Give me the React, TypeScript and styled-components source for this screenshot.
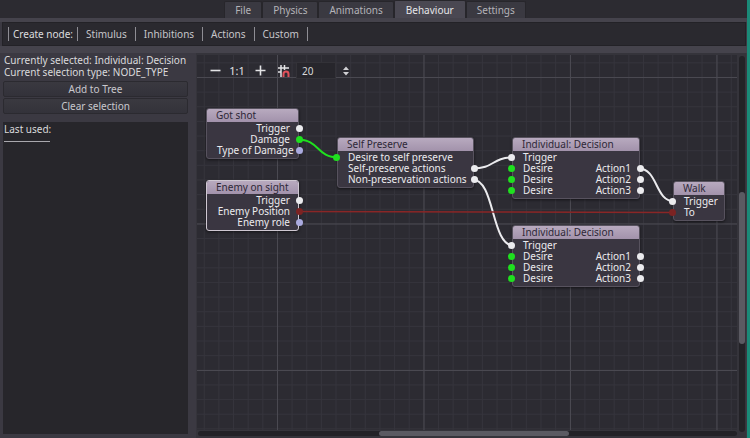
import React from 'react'
import styled, { createGlobalStyle } from 'styled-components'

const GlobalStyle = createGlobalStyle`
    html, body {
        margin: 0;
        padding: 0;
        background: #3b3942;
    }
    body {
        font-family: "Noto Sans", "DejaVu Sans", sans-serif;
        font-size: 10px;
        color: #d6d6d8;
    }
`

const Window = styled.div`
    position: relative;
    width: 747px;
    height: 438px;
    display: flex;
    flex-direction: column;
    background: #3b3942;
    border-right: 3px solid #1a8a78;
    overflow: hidden;
`

const TabBar = styled.div`
    height: 18px;
    display: flex;
    justify-content: center;
    align-items: flex-end;
    background: #2c2b31;
    padding-left: 3px;
`

const Tab = styled.div<{ $active?: boolean }>`
    height: ${p => (p.$active ? 18 : 17)}px;
    padding: 0 ${p => (p.$active ? 11 : 10)}px;
    box-sizing: border-box;
    display: flex;
    align-items: center;
    border: 1px solid #27262b;
    border-bottom: none;
    border-radius: 2px 2px 0 0;
    background: ${p => (p.$active ? '#4a4852' : '#3a3941')};
    color: ${p => (p.$active ? '#e6e6e8' : '#b4b3b8')};
`

const Strip = styled.div<{ $h: number }>`
    height: ${p => p.$h}px;
    background: #45434c;
`

const Toolbar = styled.div`
    height: 24px;
    margin: 0 1px 0 2px;
    box-sizing: border-box;
    display: flex;
    align-items: center;
    padding-left: 5px;
    background: #2a292f;
    border: 1px solid #232227;
`

const Sep = styled.span`
    width: 1px;
    height: 14px;
    background: #8e8d94;
`

const ToolLabel = styled.span`
    padding: 0 4px;
    color: #dcdcde;
`

const MenuButton = styled.span`
    padding: 0 8px;
    color: #c6c5ca;
`

const Content = styled.div`
    flex: 1;
    display: flex;
    min-height: 0;
`

const LeftPanel = styled.div`
    width: 185px;
    flex: none;
    padding: 1px 8px 4px 3px;
    display: flex;
    flex-direction: column;
`

const InfoLine = styled.div`
    height: 12px;
    line-height: 12px;
    padding-left: 1px;
    color: #dadadc;
    white-space: nowrap;
`

const Button = styled.div<{ $top: number }>`
    height: 16px;
    margin-top: ${p => p.$top}px;
    box-sizing: border-box;
    display: flex;
    align-items: center;
    justify-content: center;
    border: 1px solid #2b2a30;
    border-radius: 2px;
    background: linear-gradient(#3a3940, #33323a);
    color: #c9c8cd;
`

const ListBox = styled.div`
    flex: 1;
    margin-top: 8px;
    background: #27262b;
    padding: 0 1px;
`

const ListTitle = styled.div`
    display: inline-block;
    line-height: 12px;
    padding: 0 0 6px 0;
    width: 46px;
    white-space: nowrap;
    border-bottom: 1px solid #a9a8ae;
    color: #dadadc;
`

const GraphPanel = styled.div`
    flex: none;
    display: grid;
    grid-template-columns: 540px 9px;
    grid-template-rows: 375px 6px;
    padding: 2px 0 0 1px;
    background: #35343b;
`

const Canvas = styled.div`
    grid-column: 1;
    grid-row: 1;
    position: relative;
    overflow: hidden;
    background-color: #2c2b32;
    background-image:
        linear-gradient(to right, #4a4951 1px, transparent 1px),
        linear-gradient(to bottom, #4a4951 1px, transparent 1px),
        linear-gradient(to right, #35343c 1px, transparent 1px),
        linear-gradient(to bottom, #35343c 1px, transparent 1px);
    background-size: 146.5px 146.5px, 146.5px 146.5px, 14.65px 14.65px, 14.65px 14.65px;
    background-position: 80px 22px, 80px 22px, 6.75px 7.35px, 6.75px 7.35px;
`

const VTrack = styled.div`
    grid-column: 2;
    grid-row: 1 / 3;
    margin: 1px 1px 4px 2px;
    position: relative;
    background: #232227;
    border-radius: 3px;
`

const VThumb = styled.div`
    position: absolute;
    left: 0;
    right: 0;
    top: 136px;
    height: 152px;
    background: #5b5a62;
    border-radius: 3px;
`

const HTrack = styled.div`
    grid-column: 1;
    grid-row: 2;
    position: relative;
    margin: 1px 0 0 1px;
    background: #232227;
    border-radius: 3px;
`

const HThumb = styled.div`
    position: absolute;
    top: 0;
    bottom: 0;
    left: 181px;
    width: 190px;
    background: #5b5a62;
    border-radius: 3px;
`

const ZoomBar = styled.div`
    position: absolute;
    left: 11px;
    top: 7px;
    height: 17px;
    display: flex;
    align-items: center;
    color: #e2e2e4;
    z-index: 3;
`

const ZoomButton = styled.span<{ $w: number; $size?: number }>`
    width: ${p => p.$w}px;
    display: flex;
    justify-content: center;
    align-items: center;
    font-size: ${p => p.$size ?? 13}px;
`

const SnapButton = styled.span`
    display: flex;
    margin-left: 8px;
`

const SpinBox = styled.div`
    width: 40px;
    height: 17px;
    box-sizing: border-box;
    margin-left: 6px;
    padding-left: 5px;
    display: flex;
    align-items: center;
    background: #27262c;
    border: 1px solid #333238;
    color: #d8d8da;
`

const Wires = styled.svg`
    position: absolute;
    left: 0;
    top: 0;
    width: 540px;
    height: 375px;
    z-index: 1;
`

const NodeBox = styled.div<{ $selected?: boolean }>`
    position: absolute;
    z-index: 2;
    box-sizing: border-box;
    padding-bottom: 2px;
    background: #3a3641;
    border: 1px solid ${p => (p.$selected ? '#cfc8d2' : '#57525e')};
    border-radius: 3px;
    box-shadow: 0 1px 3px rgba(0, 0, 0, 0.55);
`

const NodeTitle = styled.div`
    height: 13px;
    line-height: 13px;
    padding-left: 9px;
    margin-bottom: 1px;
    background: linear-gradient(#b8aabf, #a292ab);
    border-radius: 2px 2px 0 0;
    color: #2e2837;
    white-space: nowrap;
`

const Row = styled.div`
    position: relative;
    height: 11px;
    line-height: 11px;
    display: flex;
    justify-content: space-between;
    padding: 0 8px 0 10px;
    color: #ecebee;
    white-space: nowrap;
`

const Port = styled.span<{ $side: 'left' | 'right'; $color: string }>`
    position: absolute;
    top: 2px;
    ${p => p.$side}: -5px;
    width: 7px;
    height: 7px;
    border-radius: 50%;
    background: ${p => p.$color};
`

const WHITE = '#ebebee'
const GREEN = '#1fe01f'
const LAVENDER = '#aaaadf'
const RED = '#7c2323'

type Slot = { left?: string; right?: string; inPort?: string; outPort?: string }
type NodeDef = { id: string; title: string; x: number; y: number; w: number; rows: Slot[]; selected?: boolean }

const decisionRows: Slot[] = [
    { left: 'Trigger', inPort: WHITE },
    { left: 'Desire', right: 'Action1', inPort: GREEN, outPort: WHITE },
    { left: 'Desire', right: 'Action2', inPort: GREEN, outPort: WHITE },
    { left: 'Desire', right: 'Action3', inPort: GREEN, outPort: WHITE },
]

const nodes: NodeDef[] = [
    {
        id: 'shot', title: 'Got shot', x: 9, y: 53, w: 93,
        rows: [
            { right: 'Trigger', outPort: WHITE },
            { right: 'Damage', outPort: GREEN },
            { right: 'Type of Damage', outPort: LAVENDER },
        ],
    },
    {
        id: 'sight', title: 'Enemy on sight', x: 9, y: 125, w: 93, selected: true,
        rows: [
            { right: 'Trigger', outPort: WHITE },
            { right: 'Enemy Position', outPort: RED },
            { right: 'Enemy role', outPort: LAVENDER },
        ],
    },
    {
        id: 'preserve', title: 'Self Preserve', x: 140, y: 82, w: 137,
        rows: [
            { left: 'Desire to self preserve', inPort: GREEN },
            { left: 'Self-preserve actions', outPort: WHITE },
            { left: 'Non-preservation actions', outPort: WHITE },
        ],
    },
    { id: 'dec1', title: 'Individual: Decision', x: 315, y: 82, w: 128, rows: decisionRows },
    { id: 'dec2', title: 'Individual: Decision', x: 315, y: 170, w: 128, rows: decisionRows },
    {
        id: 'walk', title: 'Walk', x: 476, y: 126, w: 52,
        rows: [
            { left: 'Trigger', inPort: WHITE },
            { left: 'To', inPort: RED },
        ],
    },
]

const byId = (id: string) => nodes.find(n => n.id === id)!
const portY = (n: NodeDef, row: number) => n.y + 15 + row * 11 + 5.5
const outPos = (id: string, row: number) => {
    const n = byId(id)
    return [n.x + n.w - 1.5, portY(n, row)]
}
const inPos = (id: string, row: number) => {
    const n = byId(id)
    return [n.x + 1.5, portY(n, row)]
}

const links = [
    { from: outPos('shot', 1), to: inPos('preserve', 0), color: GREEN, width: 2 },
    { from: outPos('preserve', 1), to: inPos('dec1', 0), color: WHITE, width: 2 },
    { from: outPos('preserve', 2), to: inPos('dec2', 0), color: WHITE, width: 2 },
    { from: outPos('dec1', 1), to: inPos('walk', 0), color: WHITE, width: 2 },
    { from: outPos('sight', 1), to: inPos('walk', 1), color: '#8a2626', width: 1.5 },
]

const curve = (a: number[], b: number[]) => {
    const dx = Math.max(Math.abs(b[0] - a[0]) * 0.55, 12)
    return `M${a[0]},${a[1]} C${a[0] + dx},${a[1]} ${b[0] - dx},${b[1]} ${b[0]},${b[1]}`
}

const Node = ({ node }: { node: NodeDef }) => (
    <NodeBox $selected={node.selected} style={{ left: node.x, top: node.y, width: node.w }}>
        <NodeTitle>{node.title}</NodeTitle>
        {node.rows.map((r, i) => (
            <Row key={i}>
                <span>{r.left ?? ''}</span>
                <span>{r.right ?? ''}</span>
                {r.inPort && <Port $side="left" $color={r.inPort} />}
                {r.outPort && <Port $side="right" $color={r.outPort} />}
            </Row>
        ))}
    </NodeBox>
)

const MinusIcon = () => (
    <svg width="11" height="11" viewBox="0 0 11 11">
        <path d="M0.5 5.5h10" stroke="#e4e4e6" strokeWidth="1.6" />
    </svg>
)

const PlusIcon = () => (
    <svg width="11" height="11" viewBox="0 0 11 11">
        <path d="M0.5 5.5h10M5.5 0.5v10" stroke="#e4e4e6" strokeWidth="1.6" />
    </svg>
)

const SnapIcon = () => (
    <svg width="13" height="14" viewBox="0 0 13 14">
        <path d="M4 1v12M7.5 1v5M1 4h11M1 8h3" stroke="#e4e4e6" strokeWidth="1.5" fill="none" />
        <path d="M6.5 13V10a2.5 2.5 0 0 1 5 0v3" stroke="#e0505a" strokeWidth="2" fill="none" />
    </svg>
)

const SpinArrows = () => (
    <svg width="8" height="12" viewBox="0 0 8 12" style={{ marginLeft: 6 }}>
        <path d="M1 5l3-3.5L7 5z M1 7l3 3.5L7 7z" fill="#d0d0d4" />
    </svg>
)

export default function App() {
    return (
        <>
            <GlobalStyle />
            <Window>
                <TabBar>
                    <Tab>File</Tab>
                    <Tab>Physics</Tab>
                    <Tab>Animations</Tab>
                    <Tab $active>Behaviour</Tab>
                    <Tab>Settings</Tab>
                </TabBar>
                <Strip $h={4} />
                <Toolbar>
                    <Sep />
                    <ToolLabel>Create node:</ToolLabel>
                    <Sep />
                    {['Stimulus', 'Inhibitions', 'Actions', 'Custom'].map(t => (
                        <React.Fragment key={t}>
                            <MenuButton>{t}</MenuButton>
                            <Sep />
                        </React.Fragment>
                    ))}
                </Toolbar>
                <Strip $h={7} />
                <Content>
                    <LeftPanel>
                        <InfoLine>Currently selected: Individual: Decision</InfoLine>
                        <InfoLine>Current selection type: NODE_TYPE</InfoLine>
                        <Button $top={3}>Add to Tree</Button>
                        <Button $top={1}>Clear selection</Button>
                        <ListBox>
                            <ListTitle>Last used:</ListTitle>
                        </ListBox>
                    </LeftPanel>
                    <GraphPanel>
                        <Canvas>
                            <ZoomBar>
                                <ZoomButton $w={14}><MinusIcon /></ZoomButton>
                                <ZoomButton $w={30} $size={11}>1:1</ZoomButton>
                                <ZoomButton $w={17}><PlusIcon /></ZoomButton>
                                <SnapButton><SnapIcon /></SnapButton>
                                <SpinBox>20</SpinBox>
                                <SpinArrows />
                            </ZoomBar>
                            <Wires viewBox="0 0 540 375">
                                {links.map((l, i) => (
                                    <path
                                        key={i}
                                        d={curve(l.from, l.to)}
                                        stroke={l.color}
                                        strokeWidth={l.width}
                                        fill="none"
                                    />
                                ))}
                            </Wires>
                            {nodes.map(n => (
                                <Node key={n.id} node={n} />
                            ))}
                        </Canvas>
                        <VTrack>
                            <VThumb />
                        </VTrack>
                        <HTrack>
                            <HThumb />
                        </HTrack>
                    </GraphPanel>
                </Content>
            </Window>
        </>
    )
}
